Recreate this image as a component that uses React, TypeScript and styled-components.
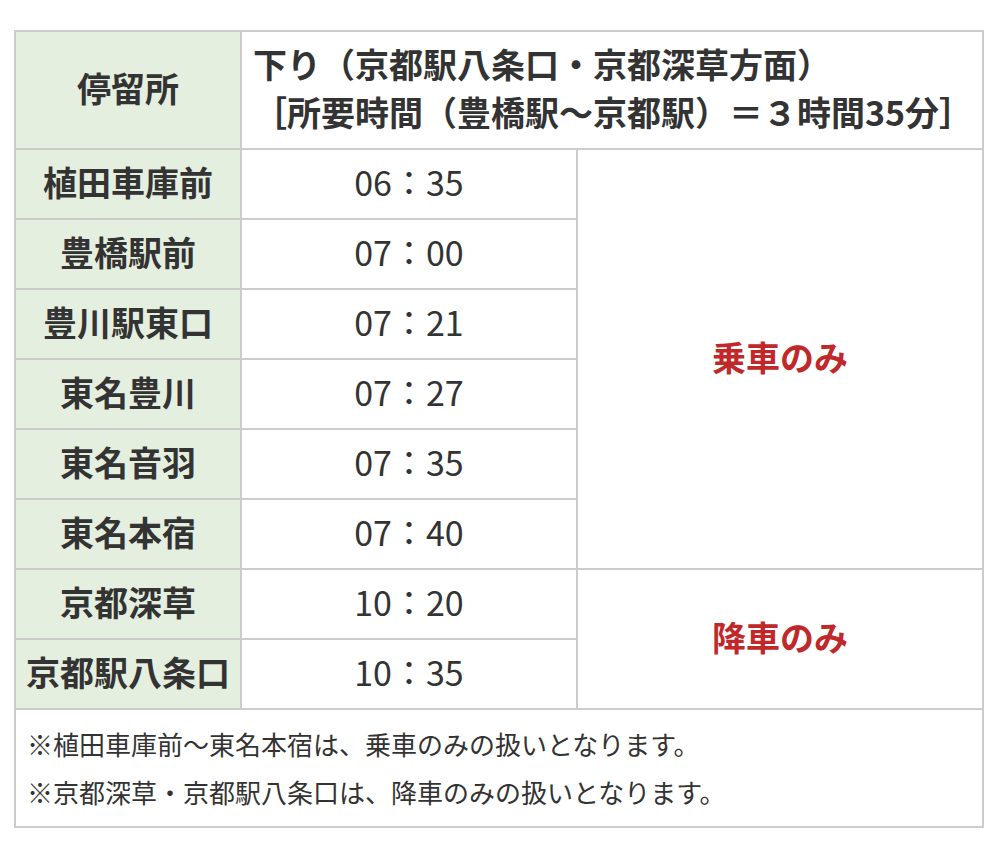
import React from "react";
import styled, { createGlobalStyle } from "styled-components";

const GlobalStyle = createGlobalStyle`
  html, body {
    margin: 0;
    padding: 0;
    background: #ffffff;
  }
  body {
    font-family: "Noto Sans CJK JP", "Noto Sans", sans-serif;
    color: #333333;
  }
`;

const Page = styled.div`
  padding: 30px 14px 16px 14px;
`;

const Table = styled.table`
  width: 970px;
  border-collapse: collapse;
  table-layout: fixed;
  border: 2px solid #cccccc;
  font-family: "Noto Sans CJK JP", sans-serif;
`;

const Cell = styled.td`
  border: 2px solid #cccccc;
  padding: 8px 11px 12px 11px;
  line-height: 48px;
  font-size: 34px;
  color: #333333;
  vertical-align: middle;
`;

const StopCell = styled(Cell)`
  background: #e5efdf;
  font-weight: 700;
  text-align: center;
  white-space: nowrap;
  padding-left: 4px;
  padding-right: 4px;
`;

const DirectionCell = styled(Cell)`
  font-weight: 700;
  text-align: left;
`;

const TimeCell = styled(Cell)`
  font-weight: 400;
  text-align: center;
`;

const NoteCell = styled(Cell)`
  font-weight: 700;
  text-align: center;
  color: #c0282a;
`;

const FootCell = styled(Cell)`
  font-size: 26px;
  font-weight: 400;
  text-align: left;
  padding: 10px 11px;
`;

type Row = { stop: string; time: string };

const rows: Row[] = [
  { stop: "植田車庫前", time: "06：35" },
  { stop: "豊橋駅前", time: "07：00" },
  { stop: "豊川駅東口", time: "07：21" },
  { stop: "東名豊川", time: "07：27" },
  { stop: "東名音羽", time: "07：35" },
  { stop: "東名本宿", time: "07：40" },
  { stop: "京都深草", time: "10：20" },
  { stop: "京都駅八条口", time: "10：35" },
];

export default function App() {
  return (
    <Page>
      <GlobalStyle />
      <Table>
        <colgroup>
          <col style={{ width: 226 }} />
          <col style={{ width: 336 }} />
          <col />
        </colgroup>
        <tbody>
          <tr>
            <StopCell as="th">停留所</StopCell>
            <DirectionCell as="th" colSpan={2}>
              下り（京都駅八条口・京都深草方面）
              <br />
              ［所要時間（豊橋駅～京都駅）＝３時間35分］
            </DirectionCell>
          </tr>
          {rows.map((r, i) => (
            <tr key={r.stop}>
              <StopCell as="th">{r.stop}</StopCell>
              <TimeCell>{r.time}</TimeCell>
              {i === 0 && <NoteCell rowSpan={6}>乗車のみ</NoteCell>}
              {i === 6 && <NoteCell rowSpan={2}>降車のみ</NoteCell>}
            </tr>
          ))}
          <tr>
            <FootCell colSpan={3}>
              ※植田車庫前～東名本宿は、乗車のみの扱いとなります。
              <br />
              ※京都深草・京都駅八条口は、降車のみの扱いとなります。
            </FootCell>
          </tr>
        </tbody>
      </Table>
    </Page>
  );
}
